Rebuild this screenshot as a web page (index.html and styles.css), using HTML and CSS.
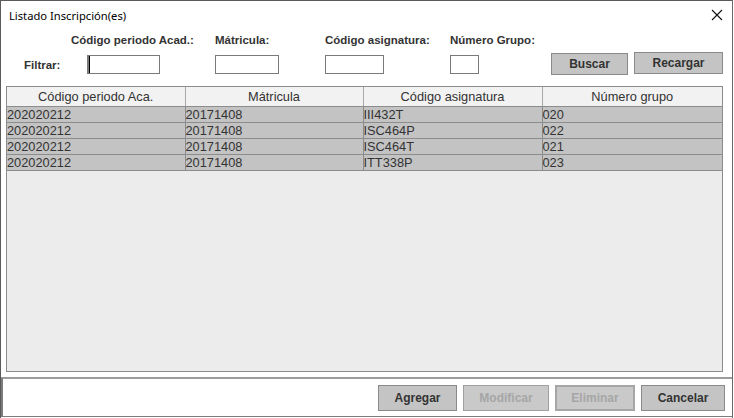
FILE: index.html
```html
<!DOCTYPE html>
<html lang="es">
<head>
<meta charset="utf-8">
<title>Listado Inscripción(es)</title>
<link rel="stylesheet" href="styles.css">
</head>
<body>
<div class="window">
  <div class="titlebar">
    <span class="title">Listado Inscripción(es)</span>
    <svg class="close" width="12" height="12" viewBox="0 0 12 12"><path d="M1 1 L11 11 M11 1 L1 11" stroke="#111" stroke-width="1.1" fill="none"/></svg>
  </div>
  <div class="filters">
    <span class="lbl l1">Código periodo Acad.:</span>
    <span class="lbl l2">Mátricula:</span>
    <span class="lbl l3">Código asignatura:</span>
    <span class="lbl l4">Número Grupo:</span>
    <span class="lbl filtrar">Filtrar:</span>
    <input class="field f1 focus" type="text">
    <input class="field f2" type="text">
    <input class="field f3" type="text">
    <input class="field f4" type="text">
    <button class="btn buscar">Buscar</button>
    <button class="btn recargar">Recargar</button>
  </div>
  <div class="table-wrap">
    <table class="grid">
      <colgroup><col class="c1"><col class="c2"><col class="c3"><col class="c4"></colgroup>
      <thead>
        <tr><th>Código periodo Aca.</th><th>Mátricula</th><th>Código asignatura</th><th>Número grupo</th></tr>
      </thead>
      <tbody>
        <tr><td>202020212</td><td>20171408</td><td>III432T</td><td>020</td></tr>
        <tr><td>202020212</td><td>20171408</td><td>ISC464P</td><td>022</td></tr>
        <tr><td>202020212</td><td>20171408</td><td>ISC464T</td><td>021</td></tr>
        <tr><td>202020212</td><td>20171408</td><td>ITT338P</td><td>023</td></tr>
      </tbody>
    </table>
  </div>
  <div class="actions">
    <button class="btn agregar">Agregar</button>
    <button class="btn modificar" disabled>Modificar</button>
    <button class="btn eliminar" disabled>Eliminar</button>
    <button class="btn cancelar">Cancelar</button>
  </div>
</div>
</body>
</html>
```
FILE: styles.css
```css
* { box-sizing: border-box; }
html, body { margin: 0; padding: 0; background: #ffffff; }
body { width: 734px; height: 418px; overflow: hidden; }

.window {
  width: 733px;
  height: 418px;
  border-top: 1px solid #5a5a5a;
  border-left: 1px solid #5a5a5a;
  border-right: 1px solid #6a6a6a;
  background: #ffffff;
  display: flex;
  flex-direction: column;
}

.titlebar {
  height: 29px;
  display: flex;
  align-items: center;
  justify-content: space-between;
  padding: 0 9px 0 8px;
}
.title {
  font-family: "Noto Sans", sans-serif;
  font-size: 11.2px;
  color: #000;
  margin-top: -1px;
}
.close { margin-top: -2px; }

.filters {
  display: grid;
  grid-template-columns: 23px 63px 128px 110px 125px 101px 83px 89px;
  grid-template-rows: 19px 27px;
  align-items: center;
  height: 56px;
  font-family: "Liberation Sans", Arial, sans-serif;
}
.lbl {
  font-weight: bold;
  font-size: 11.5px;
  color: #333;
  white-space: nowrap;
}
.l1 { grid-row: 1; grid-column: 3; margin-left: -16px; }
.l2 { grid-row: 1; grid-column: 4; }
.l3 { grid-row: 1; grid-column: 5; }
.l4 { grid-row: 1; grid-column: 6; }
.filtrar { grid-row: 2; grid-column: 2; margin-top: 4px; }

.field {
  grid-row: 2;
  height: 19px;
  border: 1px solid #7a7a7a;
  background: #fff;
  padding: 0;
  margin: 0;
  margin-top: 3px;
}
.f1 { grid-column: 3; width: 73px; }
.f2 { grid-column: 4; width: 64px; }
.f3 { grid-column: 5; width: 59px; }
.f4 { grid-column: 6; width: 29px; }
.focus { box-shadow: inset 1px 0 0 #000; border-left: 2px solid #7a7a7a; }

.btn {
  font-family: "Liberation Sans", Arial, sans-serif;
  font-weight: bold;
  font-size: 12px;
  color: #333;
  background: #c4c4c4;
  border: 1px solid #8a8a8a;
  padding: 0;
  margin: 0;
}
.buscar { grid-row: 2; grid-column: 7; width: 77px; height: 22px; margin-top: 3px; }
.recargar { grid-row: 2; grid-column: 8; width: 89px; height: 22px; margin-top: 1px; }

.table-wrap {
  margin-left: 5px;
  width: 717px;
  height: 286px;
  border: 1px solid #8c8c8c;
  background: #ececec;
}
.grid {
  border-collapse: collapse;
  table-layout: fixed;
  width: 715px;
  font-family: "Liberation Sans", Arial, sans-serif;
  font-size: 12.8px;
  color: #333;
}
.c1 { width: 178px; }
.c2 { width: 178px; }
.c3 { width: 179px; }
.c4 { width: 180px; }
.grid th {
  height: 19px;
  font-weight: normal;
  background: #f2f2f2;
  border-right: 1px solid #a8a8a8;
  border-bottom: 1px solid #8c8c8c;
  text-align: center;
  padding: 0;
}
.grid th:last-child { border-right: none; }
.grid td {
  height: 16px;
  background: #c3c3c3;
  border-right: 1px solid #8c8c8c;
  border-bottom: 1px solid #8c8c8c;
  padding: 0;
  line-height: 15px;
  white-space: nowrap;
}
.grid td:last-child { border-right: none; }

.actions {
  margin-top: 5px;
  height: 40px;
  border-top: 2px solid #9c9c9c;
  border-left: 2px solid #7c7c7c;
  border-bottom: 1px solid #7c7c7c;
  display: flex;
  align-items: center;
  justify-content: flex-end;
  gap: 6px;
  padding-right: 7px;
}
.actions .btn { height: 26px; }
.agregar { width: 79px; }
.modificar { width: 86px; }
.eliminar { width: 80px; }
.cancelar { width: 84px; }
.btn:disabled { color: #a6a6a6; background: #c9c9c9; border-color: #a0a0a0; }
.eliminar:disabled { border: 2px solid #a6a6a6; }
```
